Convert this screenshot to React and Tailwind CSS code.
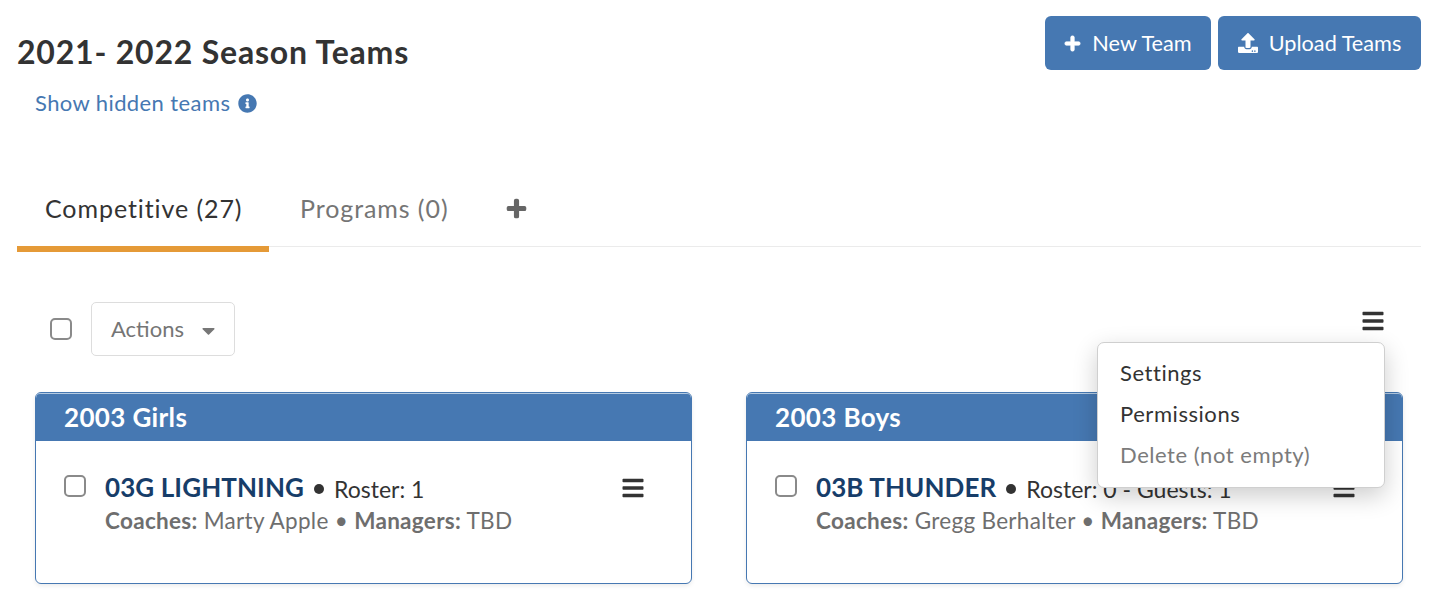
import { FaBars, FaCaretDown, FaInfoCircle, FaPlus, FaUpload } from 'react-icons/fa'

const TEAMS = [
  {
    group: '2003 Girls',
    name: '03G LIGHTNING',
    roster: 'Roster: 1',
    coach: 'Marty Apple',
  },
  {
    group: '2003 Boys',
    name: '03B THUNDER',
    roster: 'Roster: 0 - Guests: 1',
    coach: 'Gregg Berhalter',
  },
]

function Checkbox() {
  return <span className="block w-[22px] h-[22px] rounded-[5px] border-2 border-[#8a8a8a] bg-white shrink-0" />
}

function TeamCard({ group, name, roster, coach }) {
  return (
    <div className="h-[192px] rounded-[6px] border border-[#4678b2] overflow-hidden bg-white shadow-[0_2px_4px_rgba(0,0,0,0.08)]">
      <div className="h-[48px] bg-[#4678b2] rounded-t-[4px] shadow-[inset_0_1px_0_#b5cbe2] pl-[28px] pt-[1px] flex items-center text-white text-[26px] tracking-[0.35px] font-bold">
        {group}
      </div>
      <div className="flex pl-[28px] pr-[46px] pt-[34px]">
        <Checkbox />
        <div className="ml-[19px] flex-1 mt-[-3px]">
          <div className="flex items-baseline h-[30px]">
            <span className="text-[26px] font-bold text-[#173d69] leading-[30px] tracking-[0.1px]">{name}</span>
            <span className="ml-[10px] mr-[10px] w-[10px] h-[10px] rounded-full bg-[#333] self-center mt-[3px]" />
            <span className="text-[23px] text-[#333] leading-[30px] relative top-[1px]">{roster}</span>
          </div>
          <div className="mt-[5px] text-[22.5px] leading-[28px] text-[#6e6e6e] tracking-[0.3px]">
            <span className="font-bold">Coaches:</span> {coach} • <span className="font-bold">Managers:</span> TBD
          </div>
        </div>
        <FaBars className="text-[#333] mt-[1px] shrink-0" size={24} />
      </div>
    </div>
  )
}

export default function App() {
  return (
    <div className="relative h-[602px] overflow-hidden bg-white pl-[17px] pr-[11px] pt-[16px] font-['Lato',sans-serif]">
      <div className="flex justify-between items-start">
        <div>
          <h1 className="mt-[16px] text-[32px] leading-[40px] font-bold text-[#333] tracking-[0.8px]">2021- 2022 Season Teams</h1>
          <a className="mt-[16px] ml-[18px] flex items-center text-[22px] leading-[30px] text-[#4678b2] tracking-[0.4px]">
            Show hidden teams
            <FaInfoCircle className="ml-[8px]" size={19} />
          </a>
        </div>
        <div className="flex gap-[7px]">
          <button className="h-[54px] w-[166px] rounded-[6px] bg-[#4678b2] text-white text-[21.7px] flex items-center justify-center">
            <FaPlus size={17} className="mr-[11px] stroke-current stroke-[30]" />
            New Team
          </button>
          <button className="h-[54px] w-[203px] rounded-[6px] bg-[#4678b2] text-white text-[21.7px] flex items-center justify-center">
            <FaUpload size={20} className="mr-[11px]" />
            Upload Teams
          </button>
        </div>
      </div>

      <div className="mt-[59px] flex h-[70px] border-b border-[#ebebeb] text-[25px] tracking-[0.92px]">
        <div className="w-[252px] h-[75px] border-b-[6px] border-[#e59a37] pl-[28px] pt-[13px] text-[#333] leading-[36px]">
          Competitive (27)
        </div>
        <div className="ml-[31px] pt-[13px] text-[#757575] leading-[36px]">Programs (0)</div>
        <div className="ml-[58px] pt-[21px] text-[#666]">
          <FaPlus size={21} className="stroke-current stroke-[30]" />
        </div>
      </div>

      <div className="mt-[55px] pl-[33px] pr-[36px] flex items-center">
        <Checkbox />
        <button className="ml-[19px] w-[144px] h-[54px] rounded-[5px] border border-[#dddddd] flex items-center pl-[19px] pb-[2px] text-[22px] text-[#757575]">
          Actions
          <FaCaretDown size={21} className="ml-[14px] mt-[4px] text-[#777]" />
        </button>
        <FaBars className="ml-auto mt-[-16px] text-[#333]" size={24} />
      </div>

      <div className="mt-[36px] pl-[18px] grid grid-cols-[657px_657px] gap-x-[54px]">
        {TEAMS.map((t) => (
          <TeamCard key={t.name} {...t} />
        ))}
      </div>

      <div className="absolute left-[1097px] top-[342px] w-[288px] h-[146px] rounded-[7px] border border-[#cfcfcf] bg-white shadow-[0_8px_24px_rgba(0,0,0,0.2)] pl-[22px] pt-[9px] text-[22px] tracking-[0.55px]">
        <div className="text-[#333] leading-[41px]">Settings</div>
        <div className="text-[#333] leading-[41px]">Permissions</div>
        <div className="text-[#7b7b7b] leading-[42px]">Delete (not empty)</div>
      </div>
    </div>
  )
}
